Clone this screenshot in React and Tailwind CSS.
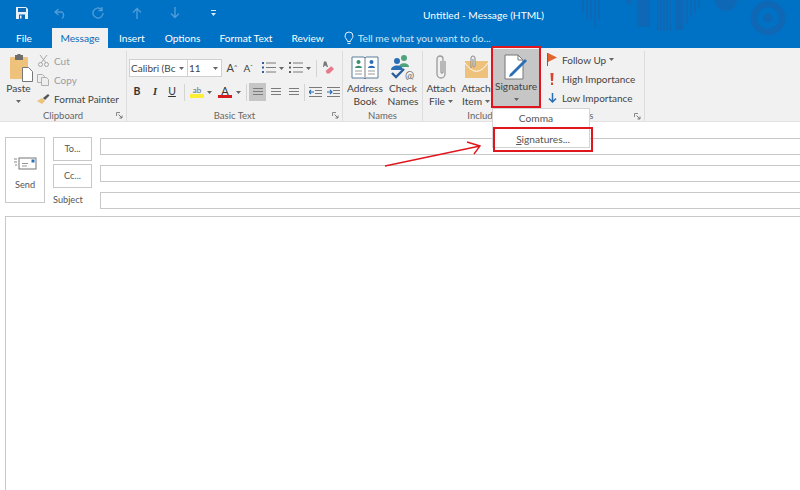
import React from "react";

const F = "font-['Lato','Roboto',sans-serif]";

function Chevron({ className = "" }) {
  return <svg width="5" height="3" viewBox="0 0 5 3" className={className}><path d="M0 0h5L2.500 3z" fill="#666" /></svg>;
}

function Launcher() {
  return (
    <svg width="7" height="7" viewBox="0 0 7 7" className="shrink-0">
      <path d="M.5 4V.5H4" fill="none" stroke="#888" />
      <path d="M2.500 2.500L6 6M6 3.500V6H3.500" fill="none" stroke="#777" />
    </svg>
  );
}

function Group({ label, width, launcher, children, pad = "" }) {
  return (
    <div className={`relative flex flex-col shrink-0 border-r border-[#dcdcdc] mt-[3px] ${width}`}>
      <div className={`flex-1 flex ${pad}`}>{children}</div>
      <div className="h-[10px] flex items-center justify-center relative text-[9.5px] leading-none text-[#666]">
        <span>{label}</span>
        {launcher && <span className="absolute right-[3px] top-[1px]"><Launcher /></span>}
      </div>
    </div>
  );
}

function Small({ icon, text, muted }) {
  return (
    <div className={`h-[19px] flex items-center gap-[3px] text-[10px] leading-none whitespace-nowrap ${muted ? "text-[#9c9c9c]" : "text-[#444]"}`}>
      <span className="w-[16px] h-[16px] flex items-center justify-center shrink-0">{icon}</span>
      <span>{text}</span>
    </div>
  );
}

function Big({ icon, lines, chevron, width, active }) {
  return (
    <div className={`flex flex-col items-center ${width} text-[10.2px] leading-[13px] text-[#444] ${active ? "bg-[#c6c6c6] self-start h-[58px]" : ""}`}>
      <div className="h-[30px] flex items-center justify-center shrink-0">{icon}</div>
      <div className="mt-[1px] text-center whitespace-nowrap">{lines[0]}</div>
      <div className="flex items-center gap-[3px] whitespace-nowrap h-[13px]">
        {lines[1] && <span>{lines[1]}</span>}
        {chevron && <Chevron />}
      </div>
    </div>
  );
}

function Lines() {
  return (
    <svg width="10" height="10" viewBox="0 0 10 10">
      {[1, 4, 7].map((y) => <path key={y} d={`M0 ${y + .5}h10`} stroke="#7b7b7b" />)}
    </svg>
  );
}

function ListIcon({ numbered }) {
  return (
    <svg width="14" height="12" viewBox="0 0 14 12">
      {[1, 5.500, 10].map((y) => <g key={y}><rect x="0" y={y - 1} width="2" height="2" fill={numbered ? "#5f5f5f" : "#2f5f9e"} /><path d={`M4 ${y}h10`} stroke="#7b7b7b" /></g>)}
    </svg>
  );
}

function Indent({ flip }) {
  return (
    <svg width="13" height="12" viewBox="0 0 13 12">
      {[.5, 3.500, 6.500, 9.500].map((y) => <path key={y} d={`M${y === .5 || y === 9.500 ? 0 : 6} ${y + 1}H13`} stroke="#7b7b7b" />)}
      <path d={flip ? "M0 6h5M3 4l2 2-2 2" : "M5 6H0M2 4L0 6l2 2"} fill="none" stroke="#2a6fb5" strokeWidth="1.200" />
    </svg>
  );
}

const Combo = ({ w, text }) => (
  <div className={`h-[18px] ${w} bg-white border border-[#d0d0d0] flex items-center justify-between pl-[1px] pr-[3px] text-[10px] text-[#444] whitespace-nowrap`}>
    <span>{text}</span><Chevron />
  </div>
);

const Sep = ({ cls = "" }) => <div className={`w-px h-[17px] bg-[#d4d4d4] ${cls}`} />;

function Field() {
  return <div className="h-[17px] w-full border border-[#c8c8c8] border-r-0 bg-white" />;
}

function Pattern() {
  return (
    <svg width="230" height="48" viewBox="0 0 230 48" className="absolute right-0 top-0" aria-hidden="true">
      <g fill="#0e68b6">
        {[0, 4, 8, 12, 16].map((x, i) => <rect key={x} x={12 + x} y="0" width="2" height={[13, 19, 20, 27, 20][i]} />)}
        <path d="M55 0h6v6z" />
        <rect x="67" y="0" width="13" height="27" />
        {[87, 90, 93, 96, 99].map((x) => <rect key={x} x={x} y="0" width="2" height="31" />)}
        <rect x="105" y="0" width="8" height="30" />
        {[116, 120, 124, 128].map((x, i) => <rect key={x} x={x} y="0" width="2" height={[24, 18, 13, 8][i]} />)}
        <path d="M145 0h22a11 11 0 0 1-22 0z" />
      </g>
      <circle cx="198" cy="18" r="14" fill="none" stroke="#0e68b6" strokeWidth="7" />
      <circle cx="198" cy="18" r="5" fill="#0e68b6" />
    </svg>
  );
}

const QatCell = ({ children }) => <div className="w-[38.2px] flex items-center justify-center">{children}</div>;

export default function App() {
  return (
    <div className={`w-[800px] h-[490px] overflow-hidden relative bg-white ${F}`}>
      {/* title bar */}
      <div className="relative h-[48px] bg-[#0072c6] text-white">
        <Pattern />
        <div className="relative h-[28px] flex items-center pl-[3px] pb-[2px]">
          <QatCell><svg width="12" height="12" viewBox="0 0 12 12"><path d="M0 0h10l2 2v10H0z" fill="#e8f1f9" /><rect x="2" y="1" width="8" height="4" fill="#0b6ab8" /><rect x="3" y="7.500" width="6" height="4.500" fill="#0b6ab8" /><rect x="4" y="8.500" width="1.500" height="3" fill="#e8f1f9" /></svg></QatCell>
          <QatCell><svg width="13" height="11" viewBox="0 0 13 11"><path d="M4.500 1L1 4l3.500 3M1 4h7a4 4 0 0 1 0 6.500" fill="none" stroke="#4f9cd8" strokeWidth="1.400" /></svg></QatCell>
          <QatCell><svg width="12" height="12" viewBox="0 0 12 12"><path d="M9.500 2.500a5 5 0 1 0 1.500 3.500M10 0v3.500H6.500" fill="none" stroke="#4f9cd8" strokeWidth="1.400" /></svg></QatCell>
          <QatCell><svg width="10" height="12" viewBox="0 0 10 12"><path d="M5 12V1.500M1 5.500l4-4 4 4" fill="none" stroke="#4f9cd8" strokeWidth="1.400" /></svg></QatCell>
          <QatCell><svg width="10" height="12" viewBox="0 0 10 12"><path d="M5 0v10.500M1 6.500l4 4 4-4" fill="none" stroke="#4f9cd8" strokeWidth="1.400" /></svg></QatCell>
          <QatCell><svg width="5" height="6" viewBox="0 0 5 6"><path d="M0 0h5v1H0zM0 3h5L2.500 6z" fill="#d6e8f6" /></svg></QatCell>
          <div className="absolute left-[423px] top-[8px] text-[10.2px] leading-[14px] whitespace-nowrap">Untitled - Message (HTML)</div>
        </div>
        <div className="relative h-[20px] flex items-stretch text-[10.2px] leading-none whitespace-nowrap">
          <div className="w-[52px] flex items-center justify-center pr-[4px]">File</div>
          <div className="w-[56px] flex items-center justify-center bg-[#f1f1f1] text-[#0b6ab8]">Message</div>
          <div className="ml-[11px] flex items-center">Insert</div>
          <div className="ml-[20px] flex items-center">Options</div>
          <div className="ml-[19px] flex items-center">Format Text</div>
          <div className="ml-[19px] flex items-center">Review</div>
          <div className="ml-[20px] flex items-center gap-[4px] text-[#cfe4f5]">
            <svg width="10" height="14" viewBox="0 0 10 14"><path d="M3.500 10.500C3.500 8.500 1 7.500 1 5a4 4 0 0 1 8 0c0 2.500-2.500 3.500-2.500 5.500zM3.500 12.500h3" fill="none" stroke="#e3f0fa" /></svg>
            <span>Tell me what you want to do...</span>
          </div>
        </div>
      </div>

      {/* ribbon */}
      <div className="h-[74px] bg-[#f1f1f1] flex border-b border-[#e2e2e2] text-[#444]">
        <Group label="Clipboard" width="w-[127px]" launcher>
          <div className="w-[35px] pl-[2px]">
            <Big width="w-[33px]" lines={["Paste", ""]} chevron icon={
              <svg width="25" height="28" viewBox="0 0 25 28" className="mt-[3px] ml-[6px]">
                <rect x="1" y="3" width="18" height="22" rx="1" fill="#eec27a" />
                <rect x="6" y="1" width="8" height="5" fill="#6d6d6d" /><rect x="8.500" y="0" width="3" height="2" fill="#6d6d6d" />
                <path d="M13.500 13.500h6l4 4v10h-10z" fill="#fff" stroke="#777" />
              </svg>} />
          </div>
          <div className="flex flex-col">
            <Small muted text="Cut" icon={<svg width="11" height="12" viewBox="0 0 11 12"><path d="M2 0l6 8M9 0L3 8" stroke="#a5a5a5" fill="none" /><circle cx="2.500" cy="9.500" r="2" fill="none" stroke="#a5a5a5" /><circle cx="8.500" cy="9.500" r="2" fill="none" stroke="#a5a5a5" /></svg>} />
            <Small muted text="Copy" icon={<svg width="12" height="12" viewBox="0 0 12 12"><path d="M.5 .5h5l2 2v6h-7z" fill="#eee" stroke="#b0b0b0" /><path d="M4.500 3.500h5l2 2v6h-7z" fill="#eee" stroke="#b0b0b0" /></svg>} />
            <Small text="Format Painter" icon={<svg width="13" height="12" viewBox="0 0 13 12"><path d="M0 8l5-3 3 3-3 3z" fill="#eec27a" /><path d="M6 5l5-4 1.500 1.500L8 7z" fill="#555" /></svg>} />
          </div>
        </Group>

        <Group label="Basic Text" width="w-[216px]" launcher pad="pl-[2px]">
          <div className="flex flex-col pt-[8px] w-full">
            <div className="flex items-center h-[18px]">
              <Combo w="w-[59px]" text="Calibri (Bc" />
              <Combo w="w-[35px] -ml-px" text="11" />
              <span className="ml-[2px] w-[16px] text-center text-[11px]">A<sup className="text-[6px]">^</sup></span>
              <span className="w-[16px] text-center text-[10px]">A<sup className="text-[6px]">ˇ</sup></span>
              <span className="ml-[6px]"><ListIcon /></span>
              <Chevron className="ml-[3px]" />
              <span className="ml-[5px]"><ListIcon numbered /></span>
              <Chevron className="ml-[3px]" />
              <Sep cls="ml-[5px]" />
              <svg width="11" height="14" viewBox="0 0 12 14" className="ml-[6px]"><path d="M1 0h2.500l2 6H4L3.500 4.500h-2L1 6H0z" fill="#777" /><path d="M3 10l6-5 3 3-5 5H4z" fill="#e8788a" /></svg>
            </div>
            <div className="flex items-center h-[18px] mt-[6px] text-[10.5px] text-[#333]">
              <span className="ml-[3px] w-[10px] font-bold text-center">B</span>
              <span className="ml-[8px] w-[10px] italic font-semibold text-center font-['Liberation_Serif',serif]">I</span>
              <span className="ml-[7px] w-[10px] underline text-center">U</span>
              <Sep cls="ml-[7px]" />
              <span className="ml-[5px] w-[14px] flex flex-col items-center leading-[8px] text-[8px] text-[#666]">ab<span className="w-[14px] h-[4px] bg-[#ffee33]" /></span>
              <Chevron className="ml-[3px]" />
              <span className="ml-[6px] w-[14px] flex flex-col items-center leading-[9px] text-[11px]">A<span className="w-[14px] h-[3px] bg-[#d41c1c]" /></span>
              <Chevron className="ml-[4px]" />
              <Sep cls="ml-[5px]" />
              <span className="ml-[2px] w-[17px] h-[18px] bg-[#c6c6c6] flex items-center justify-center"><Lines /></span>
              <span className="ml-[4px] w-[11px] flex justify-center"><Lines /></span>
              <span className="ml-[7px] w-[11px] flex justify-center"><Lines /></span>
              <Sep cls="ml-[5px]" />
              <span className="ml-[4px]"><Indent /></span>
              <span className="ml-[5px]"><Indent flip /></span>
            </div>
          </div>
        </Group>

        <Group label="Names" width="w-[80px]">
          <div className="flex pl-[2px]">
            <Big width="w-[40px]" lines={["Address", "Book"]} icon={
              <svg width="28" height="24" viewBox="0 0 28 24" className="mt-[2px]">
                <path d="M1 2h12l1 1 1-1h12v21H15l-1 1-1-1H1z" fill="#fff" stroke="#5b7f9e" />
                <path d="M14 3v20" stroke="#7d7d7d" />
                <circle cx="7.500" cy="7" r="2" fill="#3d8f6f" /><path d="M4 13c0-3 7-3 7 0z" fill="#3d8f6f" />
                <circle cx="20.500" cy="7" r="2" fill="#2a6fb5" /><path d="M17 13c0-3 7-3 7 0z" fill="#2a6fb5" />
                <path d="M4 16h7M4 19h7M17 16h7M17 19h7" stroke="#9a9a9a" />
              </svg>} />
            <Big width="w-[36px]" lines={["Check", "Names"]} icon={
              <svg width="28" height="26" viewBox="0 0 28 26" className="mt-[2px]">
                <circle cx="15" cy="4" r="3" fill="#4fa37c" /><path d="M10 13c0-5 10-5 10 0z" fill="#4fa37c" />
                <circle cx="8" cy="7" r="3" fill="#2a6fb5" /><path d="M2 16c0-6 12-6 12 0z" fill="#2a6fb5" />
                <path d="M3 19l4 4 8-8" fill="none" stroke="#2a5f9a" strokeWidth="2.400" />
                <text x="16" y="25" fontSize="11" fill="#666">@</text>
              </svg>} />
          </div>
        </Group>

        <Group label="Include" width="w-[222px] pr-[102px]" launcher={false}>
          <div className="flex shrink-0">
            <Big width="w-[36px]" lines={["Attach", "File"]} chevron icon={
              <svg width="12" height="26" viewBox="0 0 12 26" className="mt-[2px]"><path d="M10 7v13a4 4 0 0 1-8 0V5a3 3 0 0 1 6 0v13a1 1 0 0 1-2 0V7" fill="none" stroke="#9a9a9a" strokeWidth="1.300" /></svg>} />
            <Big width="w-[34px]" lines={["Attach", "Item"]} chevron icon={
              <svg width="24" height="26" viewBox="0 0 24 26" className="mt-[1px]"><rect x="1" y="7" width="23" height="17" fill="#eec27a" /><path d="M1 9c8 11 15 11 23 0" fill="none" stroke="#fff" /><path d="M7 14V4a2 2 0 0 1 4 0v8a1 1 0 0 1-2 0V5" fill="#eee" stroke="#8a8a8a" /></svg>} />
            <div className="-mt-[2px]">
              <Big active width="w-[46px]" lines={["Signature", ""]} chevron icon={
                <svg width="24" height="26" viewBox="0 0 24 26" className="mt-[5px]"><path d="M1 1h13l5 5v19H1z" fill="#fff" stroke="#777" /><path d="M14 1v5h5" fill="none" stroke="#777" /><path d="M6 20L21 5l2 2L8 22l-3 1z" fill="#2a6fb5" /></svg>} />
            </div>
          </div>
        </Group>
      </div>

      {/* compose area */}
      <div className="flex pt-[15px] pl-[5px] gap-[8px] text-[9.2px] leading-none text-[#555]">
        <div className="w-[40px] h-[66px] border border-[#c8c8c8] flex flex-col items-center pt-[19px]">
          <svg width="23" height="13" viewBox="0 0 23 13"><path d="M0 2h3M0 5h3M1 8h2" stroke="#888" /><rect x="5" y="1" width="17" height="11" fill="#fff" stroke="#777" /><rect x="17.500" y="2.500" width="3" height="3" fill="#2a6fb5" /><path d="M8 6.500h6M8 9h5" stroke="#999" /></svg>
          <span className="mt-[10px]">Send</span>
        </div>
        <div className="w-[39px] flex flex-col">
          <div className="h-[24px] border border-[#c8c8c8] flex items-center justify-center">To...</div>
          <div className="h-[24px] mt-[3px] border border-[#c8c8c8] flex items-center justify-center">Cc...</div>
          <div className="mt-[7px] whitespace-nowrap">Subject</div>
        </div>
        <div className="flex-1 flex flex-col gap-[10px] pt-[1px]">
          <Field /><Field /><Field />
        </div>
      </div>
      <div className="ml-[5px] mt-[7px] h-[280px] border border-[#c8c8c8] border-r-0" />

      {/* tags column */}
      <div className="absolute left-[543px] top-[50px] flex flex-col">
        <Small text={<span className="flex items-center gap-[3px]">Follow Up<Chevron /></span>} icon={<svg width="10" height="13" viewBox="0 0 10 13" className="ml-[2px]"><path d="M.5 0v13" stroke="#666" /><path d="M1 0l9 4.500-9 4.500z" fill="#e2652e" /></svg>} />
        <Small text="High Importance" icon={<svg width="4" height="12" viewBox="0 0 4 12" className="ml-[2px]"><path d="M.5 0h3L3 8H1z" fill="#d6452b" /><rect x="1" y="9.500" width="2" height="2.500" fill="#d6452b" /></svg>} />
        <Small text="Low Importance" icon={<svg width="9" height="10" viewBox="0 0 9 10" className="ml-[2px]"><path d="M4.500 0v9M1 5.500L4.500 9 8 5.500" fill="none" stroke="#2a6fb5" strokeWidth="1.500" /></svg>} />
      </div>
      <div className="absolute left-[575px] top-[109px] h-[14px] text-[9.5px] text-[#666] leading-[14px]">Tags</div>
      <div className="absolute left-[634px] top-[113px]"><Launcher /></div>
      <div className="absolute left-[644px] top-[51px] w-px h-[70px] bg-[#dcdcdc]" />

      {/* dropdown */}
      <div className="absolute left-[492px] top-[108px] w-[98px] h-[40px] bg-white border border-[#d4d4d4] text-[10.2px] text-[#555]">
        <div className="h-[19px] flex items-center justify-center pr-[10px]">Comma</div>
      </div>
      <div className="absolute left-[493px] top-[127px] w-[100px] h-[25px] border-2 border-[#e0161e] flex items-center justify-center text-[10.2px] text-[#555]">
        <span><span className="underline">S</span>ignatures...</span>
      </div>
      <div className="absolute left-[491px] top-[46px] w-[50px] h-[62px] border-2 border-[#e0161e]" />
      <svg width="110" height="40" viewBox="0 0 110 40" className="absolute left-[380px] top-[138px]" aria-hidden="true">
        <path d="M5 28L100 8M87 4l13 4-6 8" fill="none" stroke="#e0161e" strokeWidth="1.400" />
      </svg>
    </div>
  );
}
